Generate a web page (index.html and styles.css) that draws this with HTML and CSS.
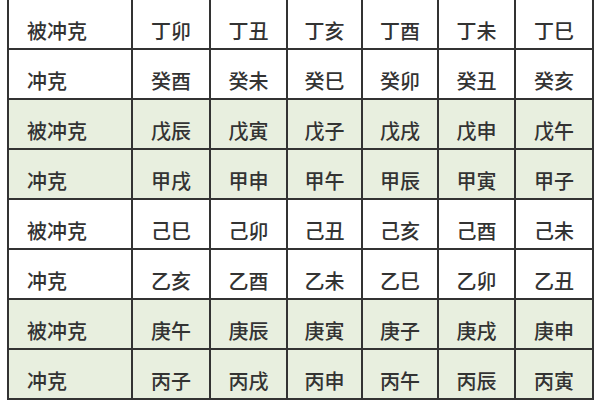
FILE: index.html
```html
<!DOCTYPE html>
<html lang="zh">
<head>
<meta charset="utf-8">
<link rel="stylesheet" href="styles.css">
</head>
<body>
<table class="chart">
  <colgroup>
    <col class="c-label"><col class="c1"><col class="c2"><col class="c3"><col class="c4"><col class="c5"><col class="c6">
  </colgroup>
  <tbody>
    <tr class="plain"><td class="label">被冲克</td><td>丁卯</td><td>丁丑</td><td>丁亥</td><td>丁酉</td><td>丁未</td><td>丁巳</td></tr>
    <tr class="plain"><td class="label">冲克</td><td>癸酉</td><td>癸未</td><td>癸巳</td><td>癸卯</td><td>癸丑</td><td>癸亥</td></tr>
    <tr class="green"><td class="label">被冲克</td><td>戊辰</td><td>戊寅</td><td>戊子</td><td>戊戌</td><td>戊申</td><td>戊午</td></tr>
    <tr class="green"><td class="label">冲克</td><td>甲戌</td><td>甲申</td><td>甲午</td><td>甲辰</td><td>甲寅</td><td>甲子</td></tr>
    <tr class="plain"><td class="label">被冲克</td><td>己巳</td><td>己卯</td><td>己丑</td><td>己亥</td><td>己酉</td><td>己未</td></tr>
    <tr class="plain"><td class="label">冲克</td><td>乙亥</td><td>乙酉</td><td>乙未</td><td>乙巳</td><td>乙卯</td><td>乙丑</td></tr>
    <tr class="green"><td class="label">被冲克</td><td>庚午</td><td>庚辰</td><td>庚寅</td><td>庚子</td><td>庚戌</td><td>庚申</td></tr>
    <tr class="green"><td class="label">冲克</td><td>丙子</td><td>丙戌</td><td>丙申</td><td>丙午</td><td>丙辰</td><td>丙寅</td></tr>
  </tbody>
</table>
</body>
</html>
```

FILE: styles.css
```css
html, body {
  margin: 0;
  padding: 0;
  background: #ffffff;
}

body {
  width: 600px;
  height: 400px;
  overflow: hidden;
  font-family: "Noto Sans CJK SC", "Noto Sans", sans-serif;
}

.chart {
  margin: -2px 0 0 7px;
  border-collapse: separate;
  border-spacing: 2px;
  background: #333333;
  table-layout: fixed;
  width: 587px;
}

.c-label { width: 122px; }
.c1 { width: 76px; }
.c2 { width: 75px; }
.c3 { width: 73px; }
.c4 { width: 74px; }
.c5 { width: 75px; }
.c6 { width: 76px; }

.chart td {
  height: 34px;
  padding: 14px 0 0 0;
  line-height: 34px;
  font-size: 20px;
  font-weight: 500;
  color: #333333;
  text-align: center;
  vertical-align: middle;
  white-space: nowrap;
}

.chart td.label {
  text-align: left;
  padding-left: 18px;
}

.plain td { background: #ffffff; }
.green td { background: #e8efdf; }
```
